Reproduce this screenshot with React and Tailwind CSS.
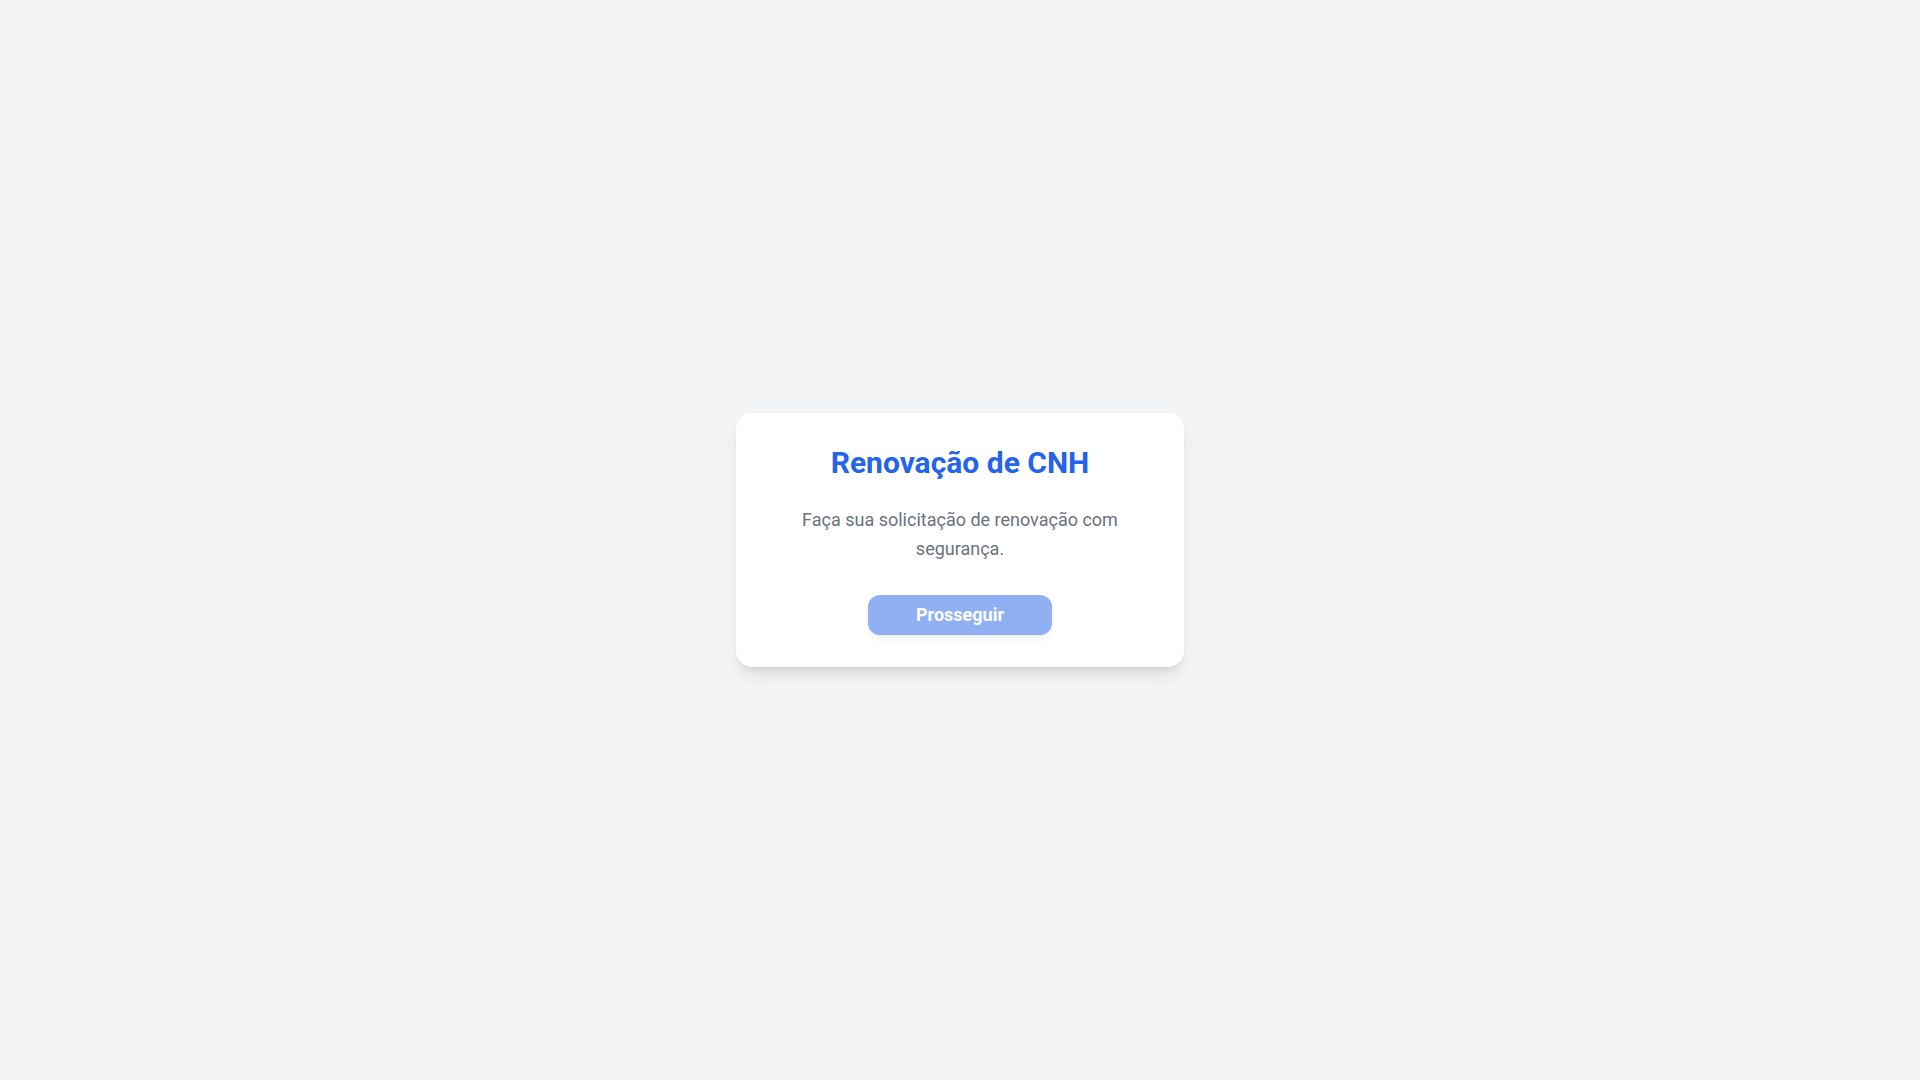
import React from "react"

export default function App() {
    return (
        <div className="min-h-screen flex items-center justify-center bg-[#f3f4f6] font-['Roboto',sans-serif]">
            <div className="w-full max-w-md bg-white rounded-2xl shadow-lg p-8 text-center">
                <h1 className="text-3xl font-bold text-[#2563eb] mb-6">Renovação de CNH</h1>
                <p className="text-lg leading-relaxed text-[#6b7280] mb-8">
                    Faça sua solicitação de renovação com segurança.
                </p>
                <button
                    disabled
                    className="bg-[#2563eb] text-white text-lg font-bold px-12 py-1.5 rounded-xl shadow-md disabled:opacity-50"
                >
                    Prosseguir
                </button>
            </div>
        </div>
    )
}
